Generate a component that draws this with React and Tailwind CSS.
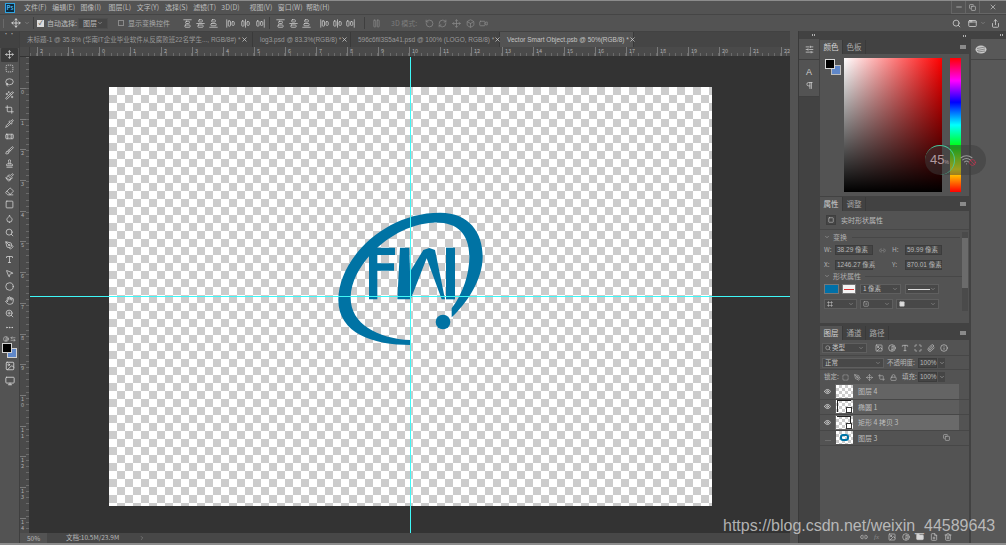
import {
  Move, SquareDashed, Lasso, Wand2, Crop, Pipette, Bandage, Brush, Stamp, Paintbrush, Eraser, Droplet, Search,
  PenTool, Type, MousePointer2, Circle, Hand, ZoomIn, MoreHorizontal, ChevronDown, ChevronRight, Minus, X, Square,
  Copy, Share, Eye, Lock, Link2, Folder, Trash2, Image, SlidersHorizontal, Paperclip, Contrast, SquareDot, Wifi, Ban,
  AlignVerticalJustifyStart, AlignVerticalJustifyCenter, AlignVerticalJustifyEnd, AlignHorizontalJustifyStart,
  AlignHorizontalJustifyCenter, AlignHorizontalJustifyEnd, Pause, RotateCcw, RefreshCw, Box, Video, AppWindow,
  Frame, ArrowLeftRight, Pilcrow, Info, Maximize, Monitor, FilePlus,
} from 'lucide-react';

const menus = ['文件(F)', '编辑(E)', '图像(I)', '图层(L)', '文字(Y)', '选择(S)', '滤镜(T)', '3D(D)', '视图(V)', '窗口(W)', '帮助(H)'];
const tools = [Move, SquareDashed, Lasso, Wand2, Crop, Pipette, Bandage, Brush, Stamp, Paintbrush, Eraser, Square, Droplet, Search, PenTool, Type, MousePointer2, Circle, Hand, ZoomIn, MoreHorizontal];
const hLabels = ['2', '1', '0', '1', '2', '3', '4', '5', '6', '7', '8', '9', '10', '11', '12', '13', '14', '15', '16', '17', '18', '19', '20', '21', '22'];
const vLabels = ['0', '1', '2', '3', '4', '5', '6', '7', '8', '9', '10', '11', '12', '13', '14'];

const checker = 'bg-[repeating-conic-gradient(#cccccc_0_25%,#ffffff_0_50%)] bg-[length:16px_16px]';

function Tab({ text, width, active }) {
  return (
    <div style={{ width }} className={`h-full flex items-center justify-between pl-[7px] pr-[4px] border-r border-[#3a3a3a] ${active ? 'bg-[#535353] text-[#c4c4c4]' : 'bg-[#454545] text-[#9a9a9a]'}`}>
      <span>{text}</span>
      <X size={7} strokeWidth={2.5} className="text-[#d0d0d0] shrink-0" />
    </div>
  );
}

function PanelTabs({ tabs }) {
  return (
    <div className="h-[14px] bg-[#424242] flex items-stretch text-[7.5px] text-[#a8a8a8] shrink-0">
      {tabs.map((t, i) => (
        <div key={t} className={`w-[23px] flex items-center justify-center border-r border-[#3a3a3a] ${i === 0 ? 'bg-[#535353] text-[#d4d4d4]' : ''}`}>{t}</div>
      ))}
      <div className="ml-auto mr-[3px] self-center w-[6px] h-[4px] bg-[#8a8a8a]"></div>
    </div>
  );
}

function Grip({ className }) {
  return (
    <div className={`flex items-center justify-end gap-[1px] shrink-0 ${className}`}>
      <div className="w-[1px] h-[2px] bg-[#b0b0b0]"></div>
      <div className="w-[1px] h-[2px] bg-[#b0b0b0]"></div>
    </div>
  );
}

function Field({ className, children }) {
  return <div className={`h-[10px] bg-[#454545] border border-[#3c3c3c] flex items-center px-[1px] text-[6.5px] text-[#b8b8b8] whitespace-nowrap font-['Liberation_Sans','Noto_Sans_CJK_SC',sans-serif] ${className}`}>{children}</div>;
}

function Drop({ className, children }) {
  return (
    <div className={`h-[10px] bg-[#484848] border border-[#5f5f5f] flex items-center justify-between px-[2px] text-[6.5px] text-[#c4c4c4] whitespace-nowrap ${className}`}>
      {children}
      <ChevronDown size={6} className="text-[#a0a0a0] shrink-0" />
    </div>
  );
}

function LayerRow({ name, bg, visible, icon, children }) {
  return (
    <div className="h-[15.5px] flex items-stretch border-b border-[#474747]">
      <div className="w-[15px] flex items-center justify-center">
        {visible ? <Eye size={7} strokeWidth={2.5} className="text-[#e0e0e0]" /> : <div className="w-[6px] h-[6px] border-b border-[#6d6d6d]"></div>}
      </div>
      <div className={`w-[124px] flex items-center pl-[1px] text-[7px] text-[#bdbdbd] ${bg}`}>
        <div className="relative w-[17px] h-[13px] shrink-0 overflow-hidden bg-[repeating-conic-gradient(#cccccc_0_25%,#ffffff_0_50%)] bg-[length:6px_6px]">{children}</div>
        <span className="ml-[5px]">{name}</span>
        {icon && <Copy size={7} className="ml-auto mr-[9px] text-[#c0c0c0]" />}
      </div>
    </div>
  );
}

function Logo() {
  return (
    <svg viewBox="0 0 540 435" className="absolute left-[211px] top-[113px] w-[180px] h-[145px]">
      <g fill="#0073a4">
        <path d="M272 435C160 435 55 400 55 300C55 180 190 38 360 38C450 38 488 100 488 170C488 240 440 310 395 352L395 325C430 280 448 220 448 170C448 100 410 65 340 68C220 72 95 190 92 290C90 370 170 415 272 420Z" />
        <path d="M147 143H225V165H172V190H222V212H172V298H147Z" />
        <path d="M240 143H268L270 215L310 150L328 144L345 150L375 298H365L320 175L272 298H232Z" />
        <path d="M378 143H405V298H378Z" />
        <circle cx="369" cy="366" r="22" />
      </g>
    </svg>
  );
}

export default function App() {
  return (
    <div className="relative w-[1006px] h-[545px] overflow-hidden bg-[#535353] flex flex-col border-t-[1.5px] border-b-[2px] border-[#8c8c8c] font-['Noto_Sans_CJK_SC','Liberation_Sans',sans-serif] text-[#c8c8c8]">
      {/* Menu bar */}
      <div className="h-[13px] flex items-center shrink-0 text-[7px]">
        <div className="ml-[5px] w-[10px] h-[10px] bg-[#0b2a3f] border border-[#2fa3e0] text-[#4fb4ec] text-[6px] leading-none flex items-center justify-center font-bold">Ps</div>
        <div className="ml-[9px] flex">
          {menus.map((m) => <div key={m} className="w-[28.2px] whitespace-nowrap text-[#bdbdbd]">{m}</div>)}
        </div>
        <div className="ml-auto h-full flex text-[#cfcfcf] border-b border-[#666]">
          <div className="w-[14px] border-l border-[#666] flex items-center justify-center"><Minus size={8} /></div>
          <div className="w-[14px] border-l border-[#666] flex items-center justify-center"><Copy size={7} /></div>
          <div className="w-[27px] border-l border-[#666] flex items-center justify-center"><X size={8} /></div>
        </div>
      </div>

      {/* Options bar */}
      <div className="h-[17px] flex items-center shrink-0 border-t border-[#454545] text-[7px] text-[#bdbdbd]">
        <div className="ml-[3px] w-[1px] h-[9px] bg-[#6a6a6a]"></div>
        <Move size={10} className="ml-[7px] text-[#e0e0e0]" />
        <ChevronDown size={6} className="ml-[3px] text-[#9a9a9a]" />
        <div className="ml-[3px] w-[1px] h-[12px] bg-[#3f3f3f]"></div>
        <div className="ml-[3px] w-[7px] h-[7px] bg-[#dcdcdc] text-[#333] text-[6px] leading-none flex items-center justify-center">✓</div>
        <span className="ml-[3px] w-[31px] whitespace-nowrap">自动选择:</span>
        <div className="w-[30px] h-[11px] bg-[#454545] border border-[#4d4d4d] flex items-center justify-between px-[4px]"><span>图层</span><ChevronDown size={6} /></div>
        <div className="ml-[10px] w-[6px] h-[6px] border border-[#8a8a8a]"></div>
        <span className="ml-[4px] w-[40px] whitespace-nowrap text-[#a8a8a8]">显示变换控件</span>
        <div className="ml-[15px] flex items-center text-[#d0d0d0]">
          <AlignVerticalJustifyStart size={9} className="mr-[4px]" />
          <AlignVerticalJustifyCenter size={9} className="mr-[4px]" />
          <AlignVerticalJustifyEnd size={9} className="mr-[8px]" />
          <AlignHorizontalJustifyStart size={9} className="mr-[6px]" />
          <AlignHorizontalJustifyCenter size={9} className="mr-[6px]" />
          <AlignHorizontalJustifyEnd size={9} className="mr-[4px]" />
        </div>
        <div className="w-[1px] h-[12px] bg-[#3f3f3f]"></div>
        <div className="ml-[6px] flex items-center text-[#d0d0d0]">
          <AlignVerticalJustifyStart size={9} className="mr-[4px]" />
          <AlignVerticalJustifyCenter size={9} className="mr-[4px]" />
          <AlignVerticalJustifyEnd size={9} className="mr-[9px]" />
          <AlignHorizontalJustifyStart size={9} className="mr-[4px]" />
          <AlignHorizontalJustifyCenter size={9} className="mr-[4px]" />
          <AlignHorizontalJustifyEnd size={9} className="mr-[9px]" />
        </div>
        <div className="w-[1px] h-[12px] bg-[#3f3f3f]"></div>
        <Pause size={9} className="ml-[7px] text-[#8a8a8a]" />
        <span className="ml-[10px] w-[34px] whitespace-nowrap text-[#7c7c7c]">3D 模式:</span>
        <div className="flex items-center text-[#8a8a8a]">
          <RotateCcw size={9} className="mr-[4px]" />
          <RefreshCw size={9} className="mr-[5px]" />
          <Move size={9} className="mr-[5px]" />
          <Box size={9} className="mr-[4px]" />
          <Video size={9} />
        </div>
        <div className="ml-auto flex items-center text-[#d8d8d8] pr-[6px]">
          <Search size={9} className="mr-[7px]" />
          <AppWindow size={9} className="mr-[3px]" />
          <ChevronDown size={6} className="mr-[5px] text-[#9a9a9a]" />
          <Share size={9} />
        </div>
      </div>

      {/* Main row */}
      <div className="flex-1 min-h-0 flex bg-[#424242]">
        {/* Tools */}
        <div className="w-[20px] shrink-0 flex flex-col items-center bg-[#535353] border-r border-[#3f3f3f] text-[#d8d8d8]">
          <div className="w-full h-[17px] bg-[#424242] shrink-0 text-[6px] leading-[6px] pl-[3px] text-[#aaa]">··</div>
          {tools.map((Icon, i) => (
            <div key={i} className={`w-[17px] h-[13.65px] shrink-0 flex items-center justify-center ${i === 0 ? 'bg-[#3a3a3a] rounded-[1px]' : ''}`}>
              <Icon size={9} strokeWidth={2} />
            </div>
          ))}
          <div className="w-full h-[7px] flex items-center justify-between px-[3px] mt-[1px]">
            <Contrast size={6} />
            <ArrowLeftRight size={6} />
          </div>
          <div className="relative w-[15px] h-[15px] mt-[1px] shrink-0">
            <div className="absolute left-[5px] top-[5px] w-[10px] h-[10px] bg-[#5f87c9] border border-[#d0d0d0]"></div>
            <div className="absolute left-0 top-0 w-[10px] h-[10px] bg-black border border-[#d0d0d0]"></div>
          </div>
          <Image size={10} className="mt-[3px]" />
          <Monitor size={10} className="mt-[5px]" />
        </div>

        {/* Document area */}
        <div className="w-[770px] shrink-0 flex flex-col">
          <div className="h-[15px] mt-[1px] shrink-0 flex text-[6.5px] whitespace-nowrap bg-[#454545] font-['Liberation_Sans','Noto_Sans_CJK_SC',sans-serif]">
            <Tab width="233px" text="未标题-1 @ 35.8% (华南IT企业毕业软件从反腐败班22名学生..., RGB/8#) *" />
            <Tab width="98px" text="log3.psd @ 83.3%(RGB/8) *" />
            <Tab width="149px" text="596c6fil3S5a41.psd @ 100% (LOGO, RGB/8) *" />
            <Tab width="134px" active text="Vector Smart Object.psb @ 50%(RGB/8) *" />
          </div>
          {/* Horizontal ruler */}
          <div className="h-[10px] shrink-0 flex bg-[#4a4a4a] border-b border-[#333]">
            <div className="w-[10px] shrink-0 border-r border-[#3d3d3d]"></div>
            <div className="flex-1 flex overflow-hidden pl-[7px] bg-[repeating-linear-gradient(90deg,#6a6a6a_0_1px,transparent_1px_6.2px)] bg-[length:100%_3px] bg-bottom bg-no-repeat">
              {hLabels.map((l, i) => (
                <div key={i} className="w-[31px] shrink-0 border-l border-[#7a7a7a] pl-[2px] text-[5.5px] leading-[8px] text-[#b0b0b0]">{l}</div>
              ))}
            </div>
          </div>
          <div className="flex-1 min-h-0 flex">
            {/* Vertical ruler */}
            <div className="w-[10px] shrink-0 bg-[#4a4a4a] border-r border-[#333] overflow-hidden flex flex-col pt-[31px] bg-[repeating-linear-gradient(180deg,#6a6a6a_0_1px,transparent_1px_6.2px)] bg-[length:3px_100%] bg-right bg-no-repeat">
              {vLabels.map((l, i) => (
                <div key={i} className="h-[30.7px] shrink-0 border-t border-[#7a7a7a] pl-[1px] text-[5.5px] leading-[6px] text-[#b0b0b0] break-all w-[6px]">{l}</div>
              ))}
            </div>
            {/* Canvas */}
            <div className="relative flex-1 bg-[#333333] pl-[79px] pt-[30px]">
              <div className={`relative w-[603px] h-[419px] ${checker}`}>
                <Logo />
              </div>
              <div className="absolute left-[380px] top-0 bottom-0 w-[1px] bg-[#3ff7f7]"></div>
              <div className="absolute left-0 right-0 top-[239px] h-[1px] bg-[#3ff7f7]"></div>
            </div>
          </div>
          <div className="h-[10px] shrink-0 flex items-center bg-[#474747] text-[6.5px] text-[#b8b8b8]">
            <div className="w-[27px] h-full bg-[#535353] pl-[7px] leading-[10px] shrink-0">50%</div>
            <span className="ml-[19px] w-[73px] whitespace-nowrap">文档:10.5M/23.9M</span>
            <ChevronRight size={6} className="text-[#9a9a9a]" />
          </div>
        </div>

        {/* Document scroll strip */}
        <div className="w-[9px] shrink-0 bg-[#535353] border-r border-[#3a3a3a]"></div>

        {/* Icon dock */}
        <div className="w-[20px] shrink-0 flex flex-col items-center text-[#d0d0d0]">
          <Grip className="w-full h-[8px] pr-[4px]" />
          <div className="w-full h-[21px] bg-[#535353] flex items-center justify-center border-b border-[#3f3f3f]"><SlidersHorizontal size={9} /></div>
          <div className="w-full h-[37px] bg-[#535353] flex flex-col items-center justify-center gap-[4px] pt-[2px] border-b border-[#3f3f3f]">
            <span className="text-[9px] leading-none font-['Liberation_Sans']">A</span>
            <Pilcrow size={9} />
          </div>
        </div>

        {/* Main panels */}
        <div className="w-[149px] ml-[1px] shrink-0 flex flex-col bg-[#424242]">
          <Grip className="w-full h-[9px] pr-[3px]" />
          {/* Color */}
          <div className="h-[156px] shrink-0 flex flex-col bg-[#535353]">
            <PanelTabs tabs={['颜色', '色板']} />
            <div className="flex pt-[4px] pl-[5px]">
              <div className="relative w-[16px] h-[16px] shrink-0 mt-[1px]">
                <div className="absolute left-[6px] top-[6px] w-[10px] h-[10px] bg-[#5f87c9] border border-[#bdbdbd]"></div>
                <div className="absolute left-0 top-0 w-[10px] h-[10px] bg-black border border-[#d8d8d8]"></div>
              </div>
              <div className="ml-[3px] w-[98px] h-[134px] shrink-0 bg-[linear-gradient(to_right,#ffffff,#ff0000)]">
                <div className="w-full h-full bg-[linear-gradient(to_top,#000000,transparent)]"></div>
              </div>
              <div className="ml-[8px] w-[11px] h-[134px] shrink-0 bg-[linear-gradient(to_bottom,#ff0000,#ff00ff_17%,#0000ff_33%,#00ffff_50%,#00ff00_67%,#ffff00_83%,#ff0000)]"></div>
            </div>
          </div>

          {/* Properties */}
          <div className="h-[126px] mt-[1px] shrink-0 flex flex-col bg-[#535353]">
            <PanelTabs tabs={['属性', '调整']} />
            <div className="h-[19px] flex items-center pl-[6px] border-b border-[#474747] text-[7px] text-[#bdbdbd] shrink-0">
              <div className="w-[10px] h-[10px] border border-[#3f3f3f] bg-[#454545] flex items-center justify-center"><Square size={6} className="text-[#ddd]" /></div>
              <span className="ml-[5px]">实时形状属性</span>
            </div>
            <div className="relative flex-1 pl-[4px] text-[6.5px] text-[#b0b0b0]">
              <div className="flex items-center h-[12px] mt-[1px] text-[7px]"><ChevronDown size={6} /><span className="ml-[3px]">变换</span><div className="ml-[5px] w-[108px] h-[1px] bg-[#474747]"></div></div>
              <div className="flex items-center mt-[2px]">
                <span className="w-[11px]">W:</span><Field className="w-[38px]">38.29 像素</Field>
                <Link2 size={7} className="ml-[6px] text-[#8a8a8a]" /><span className="ml-[6px] w-[13px]">H:</span><Field className="w-[37px]">59.99 像素</Field>
              </div>
              <div className="flex items-center mt-[5px]">
                <span className="w-[11px]">X:</span><Field className="w-[38px]">1246.27 像素</Field>
                <span className="ml-[19px] w-[13px]">Y:</span><Field className="w-[37px]">870.01 像素</Field>
              </div>
              <div className="flex items-center h-[10px] mt-[1px] text-[7px]"><ChevronDown size={6} /><span className="ml-[3px]">形状属性</span><div className="ml-[4px] w-[100px] h-[1px] bg-[#474747]"></div></div>
              <div className="flex items-center mt-[3px]">
                <div className="w-[15px] h-[10px] bg-[#0070a8] border border-[#777]"></div>
                <div className="ml-[3px] w-[14px] h-[10px] bg-[#f4f4f4] border border-[#777] flex items-center justify-center"><div className="w-[10px] h-[1px] bg-[#d33]"></div></div>
                <Drop className="ml-[4px] w-[41px]">1 像素</Drop>
                <Drop className="ml-[4px] w-[34px]"><div className="w-[25px] h-[1px] bg-[#ddd]"></div></Drop>
              </div>
              <div className="flex items-center mt-[5px]">
                <Drop className="w-[33px]"><Frame size={6} /></Drop>
                <Drop className="ml-[3px] w-[33px]"><SquareDot size={6} /></Drop>
                <Drop className="ml-[3px] w-[43px]"><Square size={6} fill="#ddd" /></Drop>
              </div>
              <div className="absolute right-[1px] top-[2px] w-[6px] h-[79px] bg-[#4a4a4a]">
                <div className="mt-[6px] h-[50px] bg-[#6b6b6b]"></div>
              </div>
            </div>
          </div>

          {/* Layers */}
          <div className="flex-1 mt-[3px] min-h-0 flex flex-col bg-[#535353]">
            <PanelTabs tabs={['图层', '通道', '路径']} />
            <div className="flex items-center h-[16px] pl-[2px] border-b border-[#474747] shrink-0 text-[#c8c8c8]">
              <Drop className="w-[45px] bg-[#454545]"><span className="flex items-center gap-[1px]"><Search size={6} />类型</span></Drop>
              <div className="ml-[8px] flex items-center gap-[5px]">
                <Image size={8} />
                <Contrast size={8} />
                <Type size={8} />
                <Maximize size={8} />
                <Paperclip size={8} />
                <Info size={8} />
              </div>
            </div>
            <div className="flex items-center h-[14px] pl-[2px] border-b border-[#474747] shrink-0 text-[6.5px] text-[#b8b8b8]">
              <Drop className="w-[62px] bg-[#454545]">正常</Drop>
              <span className="ml-[3px] w-[31px] whitespace-nowrap">不透明度:</span>
              <Field className="w-[19px]">100%</Field>
              <div className="w-[7px] h-[10px] ml-[1px] bg-[#454545] flex items-center justify-center"><ChevronDown size={6} /></div>
            </div>
            <div className="flex items-center h-[14px] pl-[4px] shrink-0 text-[6.5px] text-[#b8b8b8]">
              <span className="w-[17px] whitespace-nowrap">锁定:</span>
              <SquareDashed size={7} className="ml-[1px]" />
              <PenTool size={7} className="ml-[5px]" />
              <Move size={7} className="ml-[5px]" />
              <Crop size={7} className="ml-[5px]" />
              <Lock size={7} className="ml-[5px]" />
              <span className="ml-[5px] w-[16px] whitespace-nowrap">填充:</span>
              <Field className="w-[19px]">100%</Field>
              <div className="w-[7px] h-[10px] ml-[1px] bg-[#454545] flex items-center justify-center"><ChevronDown size={6} /></div>
            </div>
            <LayerRow name="图层 4" bg="bg-[#646464]" visible />
            <LayerRow name="椭圆 1" bg="bg-[#5d5d5d]" visible>
              <div className="absolute left-[1px] top-0 w-[14px] h-[12px] border-l border-t border-[#222]"></div>
              <div className="absolute right-[1px] bottom-0 w-[6px] h-[6px] bg-white border border-[#333]"></div>
            </LayerRow>
            <LayerRow name="矩形 4 拷贝 3" bg="bg-[#6a6a6a]" visible>
              <div className="absolute left-[1px] top-0 w-[14px] h-[12px] border-r border-t border-[#222]"></div>
              <div className="absolute right-[1px] bottom-0 w-[6px] h-[6px] bg-white border border-[#333]"></div>
            </LayerRow>
            <LayerRow name="图层 3" bg="bg-[#535353]" icon>
              <div className="absolute inset-x-[4px] inset-y-[3px] border-[2px] border-[#0073a4] rounded-[3px]"></div>
            </LayerRow>
            <div className="mt-auto h-[12px] flex items-center pl-[40px] gap-[6px] text-[#c8c8c8] shrink-0">
              <Link2 size={8} />
              <span className="text-[7px] italic leading-none w-[8px] text-[#8a8a8a] font-['Liberation_Serif']">fx</span>
              <Image size={8} />
              <Contrast size={8} />
              <Folder size={8} fill="#d8d8d8" />
              <FilePlus size={8} />
              <Trash2 size={8} />
            </div>
          </div>
        </div>

        {/* Collapsed dock */}
        <div className="flex-1 ml-[2px] flex flex-col">
          <Grip className="w-full h-[8px] pr-[3px]" />
          <div className="flex-1 bg-[#585858]">
            <div className="h-[21px] flex items-center pl-[4px] border-b border-[#454545]">
              <svg viewBox="0 0 12 9" className="w-[12px] h-[9px]">
                <ellipse cx="6" cy="4.5" rx="5.5" ry="4" fill="#c8c8c8" />
                <path d="M2 3.5L10 2M2 5.5L10 4M3 7L10 6" stroke="#6a6a6a" strokeWidth="0.7" />
              </svg>
            </div>
          </div>
        </div>
      </div>

      {/* Network speed widget floating over the panels */}
      <div className="absolute left-[925px] top-[143.5px] w-[61px] h-[30px] rounded-full bg-[#3c3c3c80] flex items-center">
        <div className="w-[30px] h-[30px] rounded-full border-r-[1px] border-t-[1px] border-[#49c79a] flex items-center justify-center text-[13px] text-[#b09aa0] font-['Liberation_Sans']">45<span className="text-[5px] mt-[5px]">%</span></div>
        <div className="relative ml-[5px] text-[#9a9a9a]">
          <Wifi size={13} />
          <Ban size={7} className="absolute right-[-3px] bottom-0 text-[#d9304f]" />
        </div>
      </div>

      {/* Watermark */}
      <div className="absolute left-[723px] top-[515px] text-[16px] leading-[20px] whitespace-nowrap text-[#d4d4d4cc] font-['Liberation_Sans']">https://blog.csdn.net/weixin_44589643</div>
    </div>
  );
}
